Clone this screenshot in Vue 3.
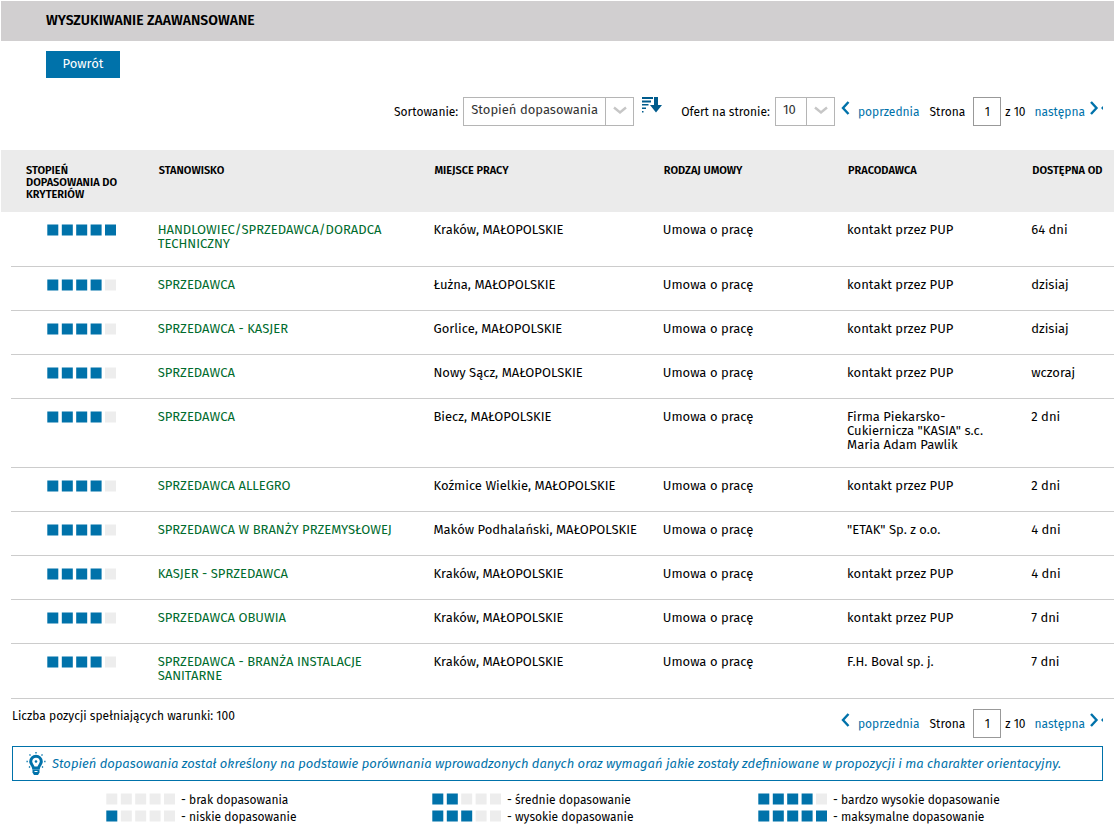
<script setup>
import { h, ref } from 'vue'

const sort = ref('Stopień dopasowania')
const perPage = ref('10')
const page = ref('1')

const rows = [
  [5, 'HANDLOWIEC/SPRZEDAWCA/DORADCA TECHNICZNY', 'Kraków, MAŁOPOLSKIE', 'kontakt przez PUP', '64 dni'],
  [4, 'SPRZEDAWCA', 'Łużna, MAŁOPOLSKIE', 'kontakt przez PUP', 'dzisiaj'],
  [4, 'SPRZEDAWCA - KASJER', 'Gorlice, MAŁOPOLSKIE', 'kontakt przez PUP', 'dzisiaj'],
  [4, 'SPRZEDAWCA', 'Nowy Sącz, MAŁOPOLSKIE', 'kontakt przez PUP', 'wczoraj'],
  [4, 'SPRZEDAWCA', 'Biecz, MAŁOPOLSKIE', 'Firma Piekarsko-Cukiernicza "KASIA" s.c. Maria Adam Pawlik', '2 dni'],
  [4, 'SPRZEDAWCA ALLEGRO', 'Koźmice Wielkie, MAŁOPOLSKIE', 'kontakt przez PUP', '2 dni'],
  [4, 'SPRZEDAWCA W BRANŻY PRZEMYSŁOWEJ', 'Maków Podhalański, MAŁOPOLSKIE', '"ETAK" Sp. z o.o.', '4 dni'],
  [4, 'KASJER - SPRZEDAWCA', 'Kraków, MAŁOPOLSKIE', 'kontakt przez PUP', '4 dni'],
  [4, 'SPRZEDAWCA OBUWIA', 'Kraków, MAŁOPOLSKIE', 'kontakt przez PUP', '7 dni'],
  [4, 'SPRZEDAWCA - BRANŻA INSTALACJE SANITARNE', 'Kraków, MAŁOPOLSKIE', 'F.H. Boval sp. j.', '7 dni'],
].map(([score, title, place, employer, since]) => ({ score, title, place, employer, since }))

const legend = [
  [[0, 'brak dopasowania'], [1, 'niskie dopasowanie']],
  [[2, 'średnie dopasowanie'], [3, 'wysokie dopasowanie']],
  [[4, 'bardzo wysokie dopasowanie'], [5, 'maksymalne dopasowanie']],
]

const Score = (props) =>
  h('svg', { width: 70, height: 12, viewBox: '0 0 70 12', role: 'img', 'aria-label': `${props.value} / 5` },
    [0.3, 14.8, 29.2, 43.6, 58].map((x, i) =>
      h('rect', { x, y: 0.5, width: 11, height: 11, fill: i < props.value ? '#0072aa' : '#ededed' })))
Score.props = ['value']
</script>

<template>
  <main class="page">
    <header class="title"><h1>WYSZUKIWANIE ZAAWANSOWANE</h1></header>
    <button class="back" type="button">Powrót</button>

    <div class="toolbar">
      <label for="sort">Sortowanie:</label>
      <span class="select wide">
        <select id="sort" v-model="sort"><option>Stopień dopasowania</option></select>
        <svg class="chevron" width="14" height="9" viewBox="0 0 14 9"><path d="M1 1.5l6 5 6-5" fill="none" stroke="#c6c6c6" stroke-width="2.4" /></svg>
      </span>
      <button class="order" type="button" aria-label="Kierunek sortowania">
        <svg width="20" height="16" viewBox="0 0 20 16" fill="#005b8c">
          <path d="M0 0h11v2H0zM0 3.5h9v2H0zM0 7h6.500v1.600H0zM0 10.500h4v1.500H0zM0 14h1.500v1.500H0z" />
          <path d="M12 0h4v8h4l-6 7.500L8 8h4z" />
        </svg>
      </button>
      <label for="count">Ofert na stronie:</label>
      <span class="select narrow">
        <select id="count" v-model="perPage"><option>10</option></select>
        <svg class="chevron" width="14" height="9" viewBox="0 0 14 9"><path d="M1 1.5l6 5 6-5" fill="none" stroke="#c6c6c6" stroke-width="2.4" /></svg>
      </span>
      <nav class="pager" aria-label="Strony">
        <a class="prev" href="#"><svg width="9" height="14" viewBox="0 0 9 14"><path d="M7.500 1L2 7l5.500 6" fill="none" stroke="#0072aa" stroke-width="2.400" /></svg><span>poprzednia</span></a>
        <label for="page-top">Strona</label>
        <input id="page-top" v-model="page" type="text" />
        <span>z 10</span>
        <a class="next" href="#"><span>następna</span><svg width="13" height="14" viewBox="0 0 13 14"><path d="M1 1l5.500 6L1 13" fill="none" stroke="#0072aa" stroke-width="2.400" /><path d="M13 5l-2 2 2 2z" fill="#0072aa" /></svg></a>
      </nav>
    </div>

    <table>
      <colgroup><col class="c1" /><col class="c2" /><col class="c3" /><col class="c4" /><col class="c5" /><col /></colgroup>
      <thead>
        <tr>
          <th>STOPIEŃ DOPASOWANIA DO KRYTERIÓW</th><th>STANOWISKO</th><th>MIEJSCE PRACY</th><th>RODZAJ UMOWY</th><th>PRACODAWCA</th><th>DOSTĘPNA OD</th>
        </tr>
      </thead>
      <tbody>
        <tr v-for="(row, i) in rows" :key="i">
          <td><Score :value="row.score" /></td>
          <td><a class="job" href="#">{{ row.title }}</a></td>
          <td>{{ row.place }}</td>
          <td>Umowa o pracę</td>
          <td class="employer">{{ row.employer }}</td>
          <td>{{ row.since }}</td>
        </tr>
      </tbody>
    </table>

    <div class="summary">
      <p>Liczba pozycji spełniających warunki: 100</p>
      <nav class="pager" aria-label="Strony, dół">
        <a class="prev" href="#"><svg width="9" height="14" viewBox="0 0 9 14"><path d="M7.500 1L2 7l5.500 6" fill="none" stroke="#0072aa" stroke-width="2.400" /></svg><span>poprzednia</span></a>
        <label for="page-bottom">Strona</label>
        <input id="page-bottom" v-model="page" type="text" />
        <span>z 10</span>
        <a class="next" href="#"><span>następna</span><svg width="13" height="14" viewBox="0 0 13 14"><path d="M1 1l5.500 6L1 13" fill="none" stroke="#0072aa" stroke-width="2.400" /><path d="M13 5l-2 2 2 2z" fill="#0072aa" /></svg></a>
      </nav>
    </div>

    <p class="note">
      <svg width="20" height="24" viewBox="0 0 20 24">
        <path d="M10 4.200a5.300 5.300 0 0 1 5.300 5.300c0 2.700-2.300 3.800-2.800 6.500h-5c-.5-2.700-2.800-3.800-2.800-6.500A5.300 5.300 0 0 1 10 4.200z" fill="#fff" stroke="#0072aa" stroke-width="3" />
        <path d="M6.500 17.500h7v3L12 23H8l-1.500-2.500z" fill="#0072aa" />
        <path d="M8.500 19.500h3" stroke="#fff" />
        <circle cx="10" cy="9.500" r="1.300" fill="#0072aa" />
        <path d="M10 0v1.500M3.500 2.500l1 1M16.500 2.500l-1 1M.5 9.500h1.300M18.200 9.500h1.300M3 15.500l1-1M17 15.500l-1-1" stroke="#0072aa" stroke-width="1.300" />
      </svg>
      <span>Stopień dopasowania został określony na podstawie porównania wprowadzonych danych oraz wymagań jakie zostały zdefiniowane w propozycji i ma charakter orientacyjny.</span>
    </p>

    <div class="legend">
      <ul v-for="(group, g) in legend" :key="g">
        <li v-for="[value, text] in group" :key="value"><Score :value="value" /><span>- {{ text }}</span></li>
      </ul>
    </div>
  </main>
</template>

<style>
body { margin: 0; background: #fff; }
</style>

<style scoped>
.page { padding-top: 1px; color: #000; font: 12px/14px "Fira Sans", "Noto Sans", sans-serif; }
.page * { box-sizing: border-box; }
a { color: #0072aa; text-decoration: none; }
button, input, select { font: inherit; border-radius: 0; }
.title { margin-left: 1px; padding: 10px 45px; background: #d1cfd0; }
h1 { margin: 0; font-size: 14px; line-height: 20px; font-weight: 600; }
.back { display: block; width: 74px; height: 27px; margin: 10px 0 0 46px; padding: 0 0 2px; border: 0; background: #0072aa; color: #fff; font-size: 13px; }
.toolbar { display: flex; justify-content: flex-end; align-items: center; height: 29px; margin: 19px 11px 24px; white-space: nowrap; }
.select { position: relative; display: block; height: 29px; margin-left: 5px; }
.wide { width: 171px; }
.narrow { width: 60px; }
.select::after { content: ""; position: absolute; top: 0; right: 28px; width: 1px; height: 100%; background: #b5b5b5; }
select { appearance: none; width: 100%; height: 100%; padding: 0 30px 3px 7px; border: 1px solid #b5b5b5; background: #fff; color: #333; font-size: 13px; outline: 0; }
.chevron { position: absolute; top: 9px; right: 7px; pointer-events: none; }
.order { height: 16px; margin: 0 19px 14px 8px; padding: 0; border: 0; background: none; }
.order svg { display: block; }
.pager { display: flex; align-items: center; height: 29px; margin-left: 6px; white-space: nowrap; }
.prev, .next { display: flex; align-items: center; }
.pager svg { display: block; margin-bottom: 7px; }
.prev { gap: 8px; }
.next { gap: 5px; margin-left: 9px; }
.pager label { margin-left: 10px; }
.pager input { width: 28px; height: 29px; margin: 0 4px 0 8px; padding: 0; border: 1px solid #999; background: #fff; text-align: center; }
table { width: calc(100% - 11px); margin-left: 11px; border-collapse: separate; border-spacing: 0; table-layout: fixed; }
.c1 { width: 13.3%; }
.c2 { width: 25%; }
.c3 { width: 20.8%; }
.c4 { width: 16.7%; }
.c5 { width: 16.7%; }
th { height: 62px; padding: 15px 9px 10px 1px; background: #ebebeb; font-size: 11px; line-height: 12px; font-weight: 600; text-align: left; vertical-align: top; }
th:first-child { padding: 15px 30px 10px 15px; box-shadow: -10px 0 #ebebeb; }
th:last-child { padding-right: 0; white-space: nowrap; }
td { height: 44px; padding: 11px 9px 15px 0; border-bottom: 1px solid #ccc; font-size: 13px; vertical-align: top; }
td:first-child { padding-left: 36px; }
td.employer { padding-right: 30px; }
td svg { display: block; margin-top: 1px; }
.job { color: #006b2d; }
.summary { display: flex; justify-content: space-between; padding: 10px 11px 8px 12px; }
.summary p { margin: 0; }
.note { display: flex; align-items: center; gap: 6px; min-height: 35px; margin: 0 11px 10px 12px; padding: 0 13px; border: 1px solid #0072aa; color: #0072aa; font-style: italic; font-size: 13px; }
.note svg { flex: none; }
.legend { display: grid; grid-template-columns: repeat(3, 1fr); margin: 0 30px 0 106px; }
ul { margin: 0; padding: 0; list-style: none; }
li { display: flex; align-items: center; gap: 5px; height: 17px; white-space: nowrap; }
li svg { margin-bottom: 2px; }
</style>
